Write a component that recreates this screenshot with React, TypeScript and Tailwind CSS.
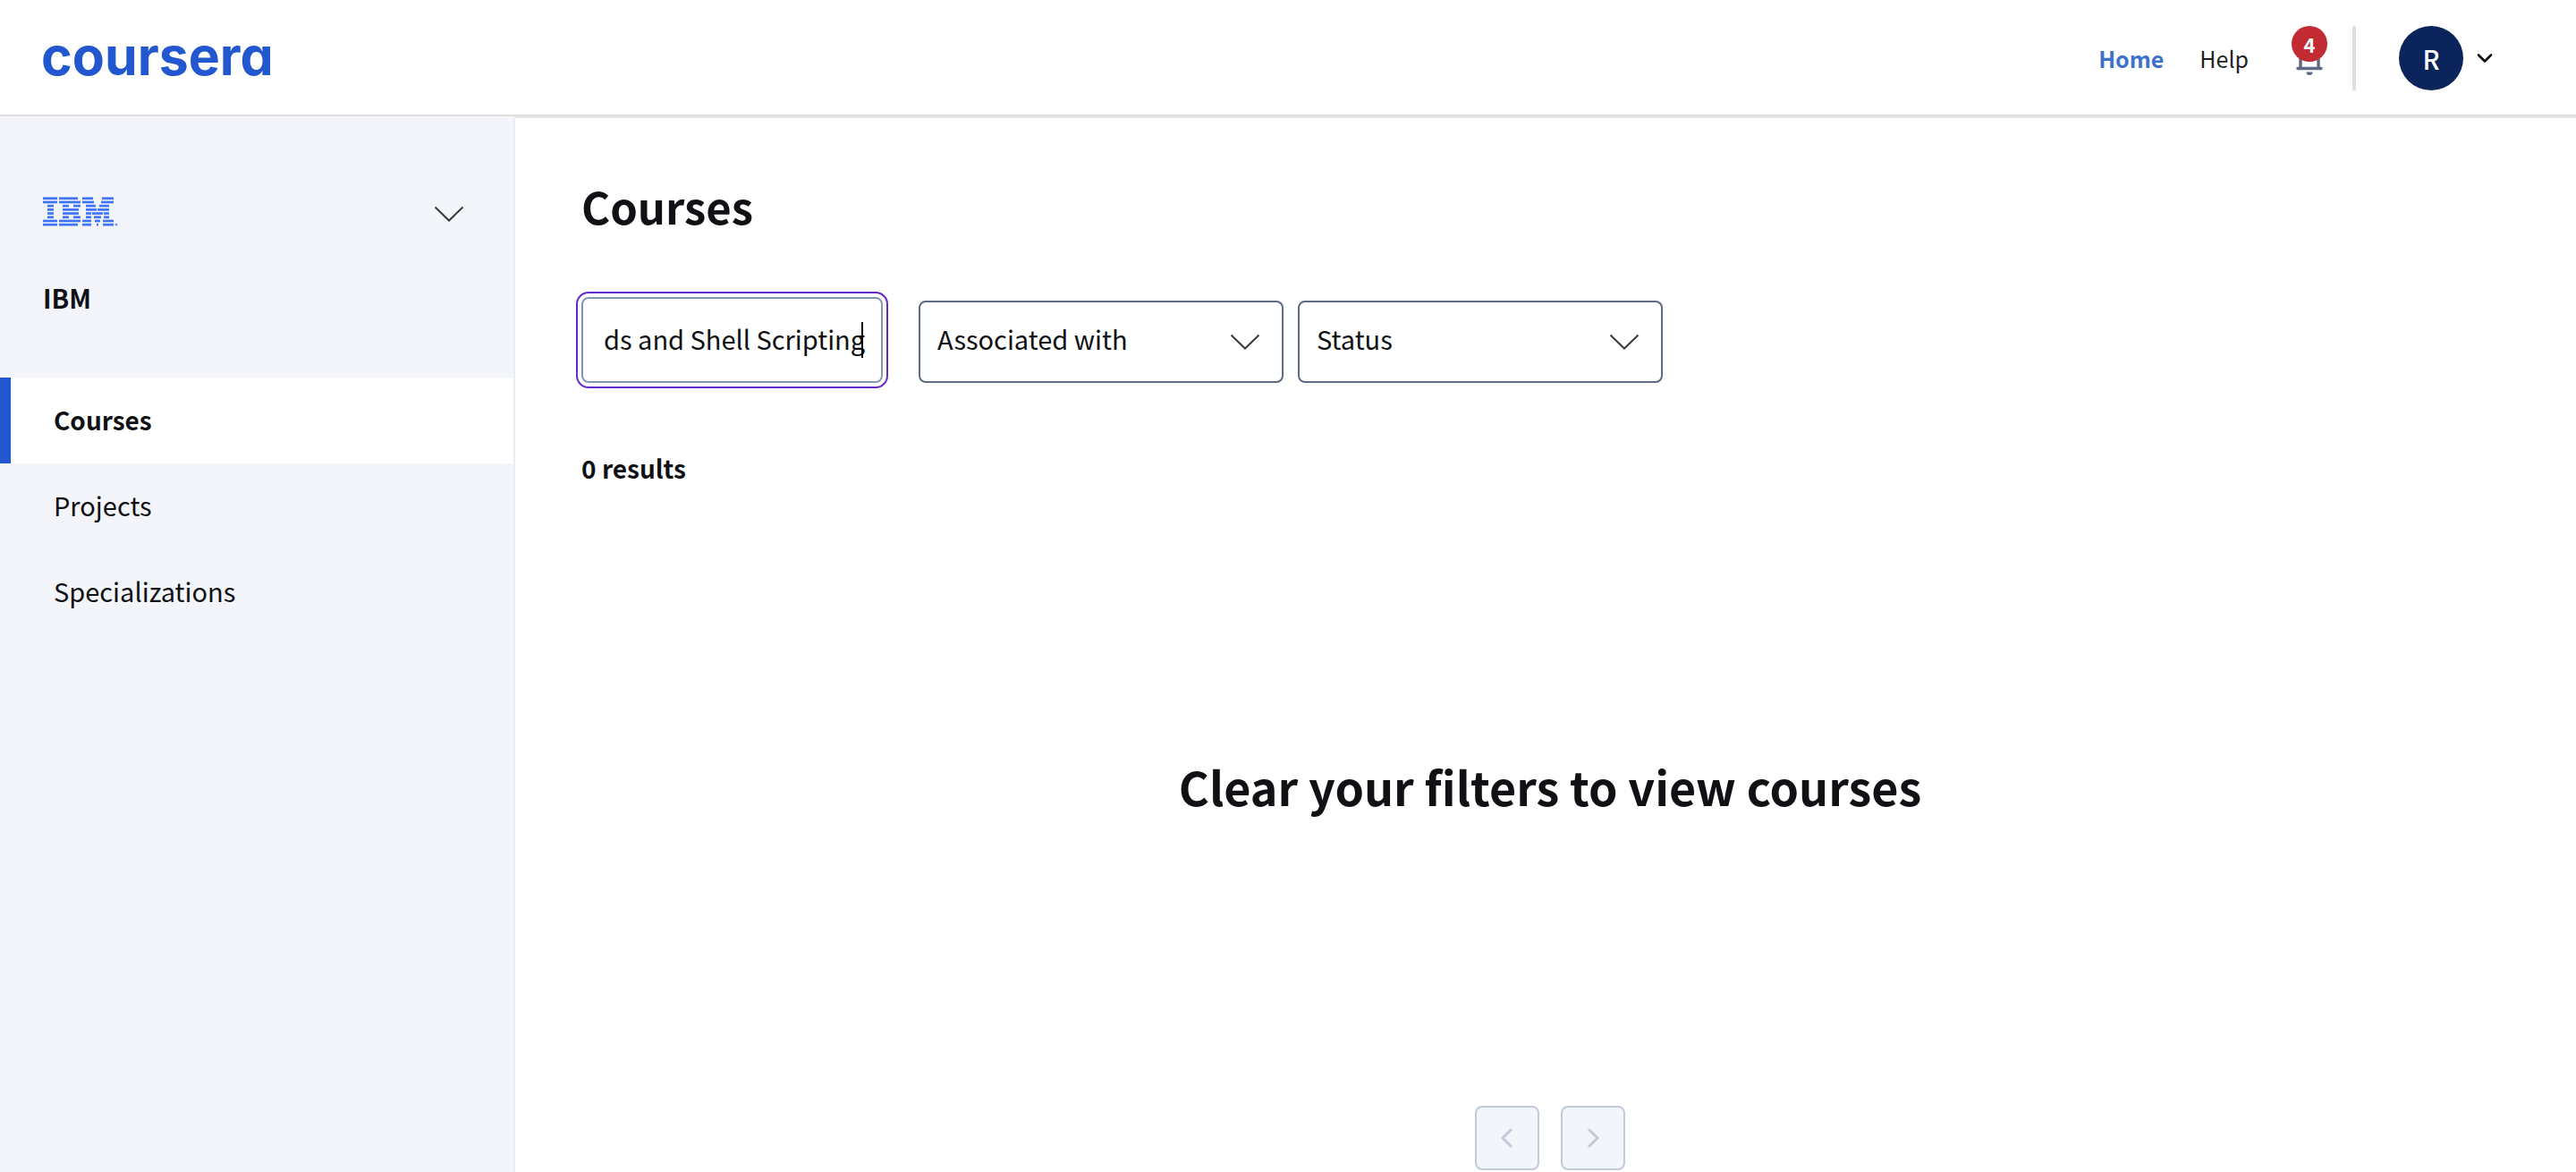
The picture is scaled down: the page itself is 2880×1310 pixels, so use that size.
import { useState } from "react";

function ThinChevron() {
  return (
    <svg width="34" height="18" viewBox="0 0 34 18" fill="none" stroke="#373a3c" strokeWidth="2" aria-hidden="true">
      <path d="M1.5 1.5 17 16.5 32.5 1.5" />
    </svg>
  );
}

/* Horizontal stripes of the eight-bar logo, each given as [start, end]. */
const logoStripes: [number, number][][] = [
  [[0, 16], [18, 39], [44, 56], [66, 79]],
  [[0, 16], [18, 42], [44, 57], [65, 79]],
  [[5, 12], [22, 29], [34, 42], [48, 59], [63, 74]],
  [[5, 12], [22, 40], [48, 60], [61, 74]],
  [[5, 12], [22, 40], [48, 54], [55, 67], [68, 74]],
  [[5, 12], [22, 29], [34, 42], [48, 54], [57, 65], [68, 74]],
  [[0, 16], [18, 42], [44, 54], [58, 64], [67, 79]],
  [[0, 16], [18, 39], [44, 54], [60, 62], [67, 79]],
];

function StripedLogo() {
  return (
    <svg width="84" height="34" viewBox="0 0 84 34" fill="#3f74fb" role="img" aria-label="IBM">
      {logoStripes.map((row, y) =>
        row.map(([start, end]) => (
          <rect key={`${y}-${start}`} x={start} y={0.4 + y * 4.2} width={end - start} height="2.7" />
        )),
      )}
      <circle cx="82" cy="31" r="1.500" opacity="0.7" />
    </svg>
  );
}

function FilterSelect({ label }: { label: string }) {
  return (
    <div className="relative flex w-[408px] items-center">
      <select
        aria-label={label}
        className="h-[92px] w-full appearance-none rounded-lg border-2 border-[#5e6983] bg-white pb-2 pl-[19px] pr-20 text-[29px] text-[#0f1114] outline-none"
      >
        <option>{label}</option>
      </select>
      <span className="pointer-events-none absolute right-[26px] flex">
        <ThinChevron />
      </span>
    </div>
  );
}

function PageButton({ label, path }: { label: string; path: string }) {
  return (
    <button
      type="button"
      disabled
      aria-label={label}
      className="flex size-[72px] items-center justify-center rounded-lg border-2 border-[#c1cad9] bg-[#f3f5fa]"
    >
      <svg width="24" height="24" viewBox="0 0 24 24" fill="none" stroke="#c1cad9" strokeWidth="3" strokeLinecap="round" strokeLinejoin="round" aria-hidden="true">
        <path d={path} />
      </svg>
    </button>
  );
}

const sections = ["Courses", "Projects", "Specializations"];

export default function App() {
  const [query, setQuery] = useState("ds and Shell Scripting");

  return (
    <div className="flex min-h-screen flex-col bg-white font-['Noto_Sans_CJK_SC',sans-serif] text-[29px] leading-10 text-[#0f1114]">
      <header className="flex h-[130px] items-center justify-between border-b-2 border-[#dfdfe0] pl-[46px] pr-[93px] pt-0.5">
        <a
          href="#"
          className="pb-1 font-['Inter',sans-serif] text-[59px] font-bold leading-[64px] text-[#2357cf] [font-feature-settings:'cv11']"
        >
          coursera
        </a>
        <div className="flex items-center">
          <nav className="flex gap-10 text-[25px]">
            <a href="#" className="font-bold text-[#3d72cc]">Home</a>
            <a href="#" className="text-[#1f1f1f]">Help</a>
          </nav>
          <button type="button" aria-label="Notifications, 4 unread" className="relative ml-12 flex h-[72px] w-10 justify-center">
            <svg width="40" height="60" viewBox="0 0 40 60" fill="none" aria-hidden="true">
              <path d="M10 47V32a10 10 0 0 1 20 0v15" stroke="#5e6983" strokeWidth="3.4" />
              <path d="M7 47.500h26" stroke="#5e6983" strokeWidth="3.400" strokeLinecap="round" />
              <path d="M16.500 51.500h7a3.500 3.500 0 0 1-7 0Z" fill="#5e6983" />
            </svg>
            <span className="absolute left-0 top-0 size-10 rounded-full bg-[#c22b32] text-center text-[22px] font-bold leading-10 text-white">
              4
            </span>
          </button>
          <div className="ml-7 h-[72px] w-1 bg-[#dfdfe0]" />
          <button type="button" aria-label="Account menu" className="ml-12 flex items-center gap-[15px]">
            <span className="flex size-[72px] items-center justify-center rounded-full bg-[#0b255c] text-[29px] font-medium text-white">
              R
            </span>
            <svg width="18" height="12" viewBox="0 0 18 12" fill="none" stroke="#0f1114" strokeWidth="2.600" strokeLinecap="round" strokeLinejoin="round" aria-hidden="true">
              <path d="M2 2.500 9 9.500 16 2.500" />
            </svg>
          </button>
        </div>
      </header>

      <div className="flex flex-1">
        <aside className="w-[576px] shrink-0 border-r-2 border-[#e8edf7] bg-[#f3f5fa]">
          <button type="button" aria-label="Choose organization" className="flex h-[214px] w-full items-center justify-between pl-12 pr-[55px]">
            <StripedLogo />
            <span className="pt-1">
              <ThinChevron />
            </span>
          </button>
          <h2 className="-mt-8 pb-[70px] pl-12 font-bold">IBM</h2>
          <nav>
            {sections.map((name) => (
              <a
                key={name}
                href="#"
                className={
                  name === "Courses"
                    ? "flex h-24 items-center border-l-12 border-[#2357cf] bg-white pb-0.5 pl-12 text-[28px] font-bold"
                    : "flex h-24 items-center pb-1 pl-[60px]"
                }
              >
                {name}
              </a>
            ))}
          </nav>
        </aside>

        <main className="flex flex-1 flex-col border-t-2 border-[#e3e3e3] pl-[74px] pr-16">
          <h1 className="mt-[66px] text-[49px] font-bold leading-[64px]">Courses</h1>
          <div className="mt-[70px] flex items-end gap-4">
            <div className="relative mr-6">
              <input
                type="text"
                aria-label="Search courses"
                value={query}
                onChange={(event) => setQuery(event.target.value)}
                className="block h-24 w-[337px] rounded-lg border-2 border-[#8495b0] bg-white pb-1 pl-[23px] pr-4 text-[29px] outline-2 outline-offset-4 outline-[#6429cd]"
              />
              <span className="absolute right-[22px] top-7 h-10 w-0.5 bg-black" />
            </div>
            <FilterSelect label="Associated with" />
            <FilterSelect label="Status" />
          </div>
          <p className="mt-[75px] text-[28px] font-bold">0 results</p>
          <h2 className="mt-[300px] text-center text-[52px] font-bold leading-[72px]">
            Clear your filters to view courses
          </h2>
          <div className="mt-auto flex justify-center gap-6 pb-0.5">
            <PageButton label="Previous page" path="M16 3 7 12 16 21" />
            <PageButton label="Next page" path="M8 3 17 12 8 21" />
          </div>
        </main>
      </div>
    </div>
  );
}
